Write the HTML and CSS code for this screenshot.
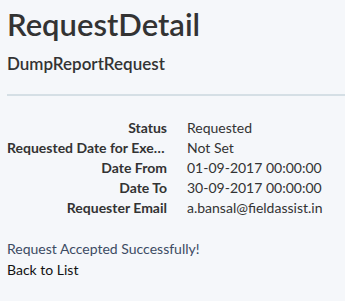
FILE: index.html
```html
<!DOCTYPE html>
<html>
<head>
<meta charset="utf-8">
<link rel="stylesheet" href="styles.css">
</head>
<body>
<div class="page">
  <h1 class="title">RequestDetail</h1>
  <div class="detail">
    <h4 class="subtitle">DumpReportRequest</h4>
    <hr class="rule">
    <dl class="props">
      <dt>Status</dt><dd>Requested</dd>
      <dt>Requested Date for Execution</dt><dd>Not Set</dd>
      <dt>Date From</dt><dd>01-09-2017 00:00:00</dd>
      <dt>Date To</dt><dd>30-09-2017 00:00:00</dd>
      <dt>Requester Email</dt><dd>a.bansal@fieldassist.in</dd>
    </dl>
  </div>
  <p class="message">Request Accepted Successfully!</p>
  <a class="back" href="#">Back to List</a>
</div>
</body>
</html>
```
FILE: styles.css
```css
html, body { margin: 0; padding: 0; }
body {
  background: #f5f7fa;
  font-family: Lato, "Liberation Sans", sans-serif;
  font-size: 14px;
  line-height: 20px;
  color: #333;
}
.page { padding: 0 7px; }
.title {
  margin: 0;
  padding-top: 4px;
  font-size: 31px;
  line-height: 40px;
  font-weight: 600;
  color: #333;
}
.subtitle {
  margin: 8px 0 0;
  font-size: 17px;
  line-height: 24px;
  font-weight: 600;
}
.rule {
  border: 0;
  border-top: 2px solid #d5dfe5;
  margin: 18px -7px 22px 0;
}
.props { margin: 0; display: grid; grid-template-columns: 160px 1fr; column-gap: 20px; }
.props dt {
  font-weight: 700;
  text-align: right;
  white-space: nowrap;
  overflow: hidden;
  text-overflow: ellipsis;
}
.props dd { margin: 0; }
.message { margin: 21px 0 0; color: #3c4b63; }
.back { display: block; color: #111; text-decoration: none; margin-top: 1px; }
```
